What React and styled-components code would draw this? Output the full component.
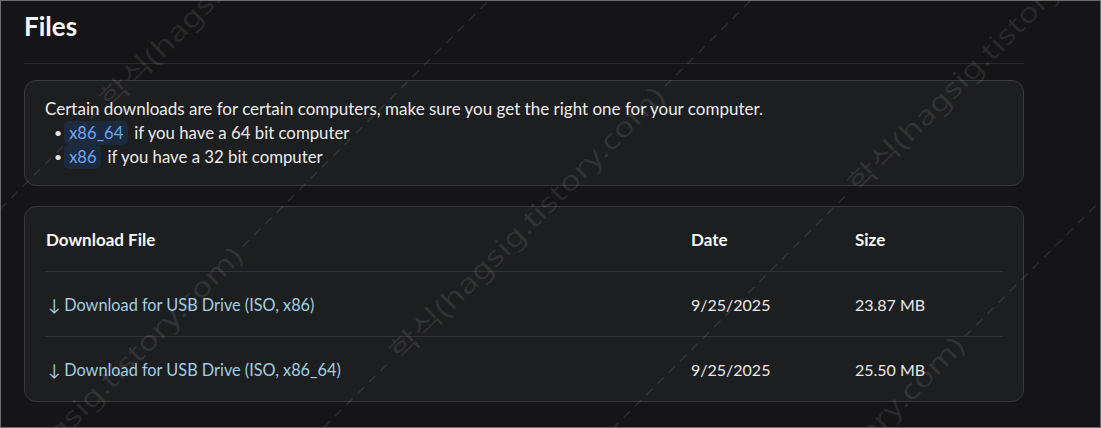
import styled, { createGlobalStyle } from "styled-components";

const GlobalStyle = createGlobalStyle`
  html, body {
    margin: 0;
    padding: 0;
    background: #151517;
  }
  body {
    font-family: Lato, "Noto Sans", "Noto Sans CJK KR", sans-serif;
    color: #ececec;
  }
`;

const files = [
  { label: "Download for USB Drive (ISO, x86)", date: "9/25/2025", size: "23.87 MB" },
  { label: "Download for USB Drive (ISO, x86_64)", date: "9/25/2025", size: "25.50 MB" }
];

// watermark text start points (left end of the rotated text)
const marks = [
  { x: 110, y: 110 },
  { x: -22, y: 522 },
  { x: 400, y: 362 },
  { x: 858, y: 194 },
  { x: 700, y: 612 }
];

const Frame = styled.div`
  position: relative;
  box-sizing: border-box;
  width: 1101px;
  height: 428px;
  border: 1px solid #6c6c6e;
  background: #151517;
  overflow: hidden;
`;

const Main = styled.main`
  width: 1000px;
  padding: 0 0 0 23px;
`;

const Title = styled.h2`
  margin: 0;
  padding-top: 8px;
  height: 63px;
  box-sizing: border-box;
  font-size: 26px;
  font-weight: 700;
  line-height: 34px;
  color: #f6f6f6;
  border-bottom: 1px solid #2b2b2e;
`;

const Card = styled.section`
  box-sizing: border-box;
  margin-top: ${(p) => p.$gap}px;
  border: 1px solid #3a3a3d;
  border-radius: 12px;
  background: #1d1e20;
  padding: ${(p) => p.$pad};
`;

const Note = styled.p`
  margin: 0;
  font-size: 17px;
  line-height: 24px;
`;

const List = styled.ul`
  margin: 0;
  padding-left: 15px;
  font-size: 16.8px;
  line-height: 24px;
`;

const Item = styled.li`
  display: flex;
  align-items: center;
  gap: 6px;
  height: 24px;
  &::before {
    content: "•";
    margin-left: -6px;
    margin-right: -4px;
    font-size: 14px;
    color: #e6e6e6;
  }
`;

const Code = styled.code`
  display: inline-flex;
  align-items: center;
  height: 24px;
  padding: 0 5px;
  border-radius: 5px;
  background: #1c2a3d;
  color: #6aa6f6;
  font-family: inherit;
  font-size: 16.5px;
`;

const Row = styled.div`
  display: grid;
  grid-template-columns: 1fr 164px 148px;
  align-items: center;
  height: 64px;
  padding-left: 1px;
  border-bottom: ${(p) => (p.$last ? "none" : "1px solid #333336")};
  font-size: ${(p) => (p.$head ? "17px" : "16px")};
  font-weight: ${(p) => (p.$head ? 700 : 400)};
  color: ${(p) => (p.$head ? "#f7f7f7" : "#e9e9e9")};
`;

const Link = styled.a`
  display: inline-flex;
  align-items: center;
  gap: 4px;
  color: #9fcfe2;
  text-decoration: none;
  padding-left: 2px;
  font-size: 16.3px;
`;

const Overlay = styled.svg`
  position: absolute;
  inset: 0;
  pointer-events: none;
`;

const Watermark = () => (
  <Overlay width="1101" height="428">
    {marks.map((m, i) => (
      <g key={i} transform={`translate(${m.x} ${m.y}) rotate(-45)`}>
        <line x1="-900" y1="-9" x2="-6" y2="-9" stroke="rgba(255,255,255,0.1)" strokeWidth="1.5" strokeDasharray="9 7" />
        <text
          x="0"
          y="0"
          textLength="375"
          lengthAdjust="spacingAndGlyphs"
          fontSize="27"
          fontFamily='"Noto Sans", "Noto Sans CJK KR", sans-serif'
          fill="rgba(255,255,255,0.09)"
        >
          학식(hagsig.tistory.com)
        </text>
        <line x1="382" y1="-9" x2="1300" y2="-9" stroke="rgba(255,255,255,0.1)" strokeWidth="1.5" strokeDasharray="9 7" />
      </g>
    ))}
  </Overlay>
);

export default function App() {
  return (
    <>
      <GlobalStyle />
      <Frame>
        <Main>
          <Title>Files</Title>
          <Card $gap={16} $pad="16px 20px 16px">
            <Note>Certain downloads are for certain computers, make sure you get the right one for your computer.</Note>
            <List>
              <Item>
                <Code>x86_64</Code>
                <span>if you have a 64 bit computer</span>
              </Item>
              <Item>
                <Code>x86</Code>
                <span>if you have a 32 bit computer</span>
              </Item>
            </List>
          </Card>
          <Card $gap={20} $pad="0 20px">
            <Row $head>
              <span>Download File</span>
              <span>Date</span>
              <span>Size</span>
            </Row>
            {files.map((f, i) => (
              <Row key={f.label} $last={i === files.length - 1}>
                <Link href="#">
                  <span>↓</span>
                  {f.label}
                </Link>
                <span>{f.date}</span>
                <span>{f.size}</span>
              </Row>
            ))}
          </Card>
        </Main>
        <Watermark />
      </Frame>
    </>
  );
}
